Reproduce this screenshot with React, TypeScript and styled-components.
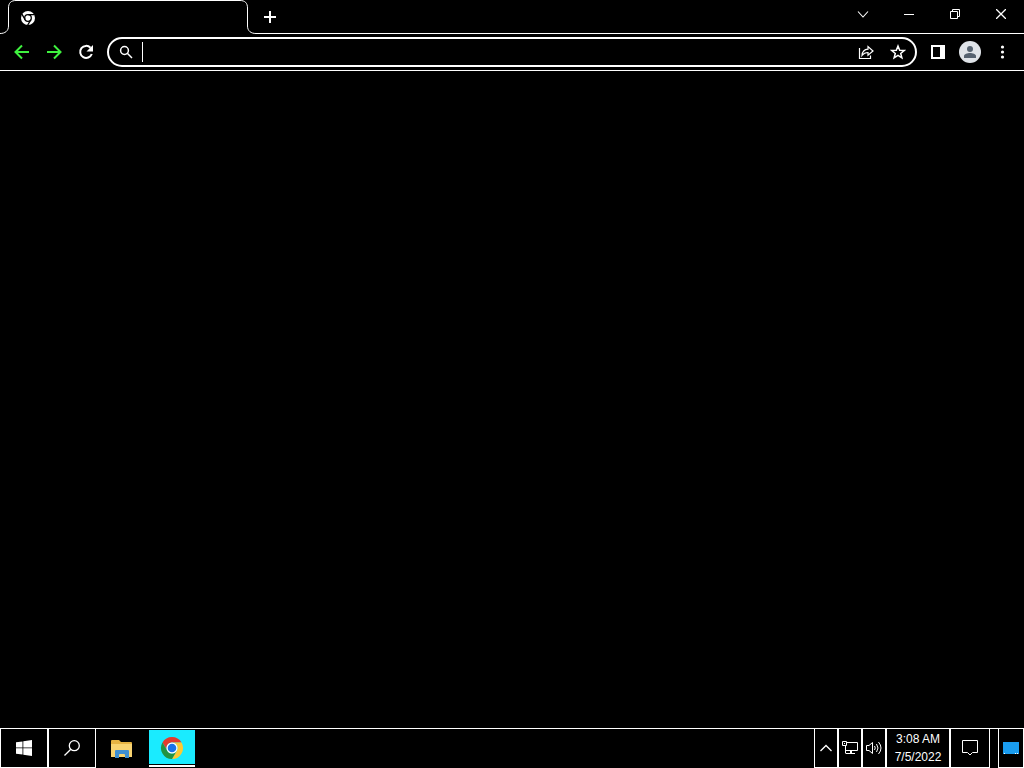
import React from "react";
import styled, { createGlobalStyle, css } from "styled-components";

const Global = createGlobalStyle`
  * { box-sizing: border-box; }
  html, body, #root { height: 100%; }
  body { margin: 0; background: #000; color: #fff; font-family: "Liberation Sans", sans-serif; overflow: hidden; }
  button { appearance: none; border: 0; padding: 0; margin: 0; background: none; color: inherit; font: inherit; }
  svg { display: block; }
`;

const Screen = styled.div`
  display: flex;
  flex-direction: column;
  height: 100%;
`;

const TabStrip = styled.header`
  display: flex;
  height: 34px;
`;

const StripBase = styled.div`
  display: flex;
  align-items: center;
  justify-content: space-between;
  flex: 1;
  border-bottom: 1px solid #fff;
`;

const TabEdge = styled.svg`
  flex: none;
  width: 16px;
  height: 34px;
`;

const Tab = styled.div`
  display: flex;
  align-items: center;
  flex: 0 1 224px;
  border-top: 1px solid #fff;
  padding-left: 4px;
`;

const IconButton = styled.button<{ $w?: number; $h?: number; $color?: string }>`
  display: flex;
  align-items: center;
  justify-content: center;
  flex: none;
  width: ${(p) => p.$w ?? 32}px;
  height: ${(p) => p.$h ?? 32}px;
  color: ${(p) => p.$color ?? "#fff"};
`;

const WindowButtons = styled.div`
  display: flex;
  align-self: flex-start;
`;

const Toolbar = styled.nav`
  display: flex;
  align-items: center;
  height: 37px;
  padding: 0 6px;
  border-bottom: 1px solid #fff;
`;

const AddressBar = styled.form`
  display: flex;
  align-items: center;
  flex: 1;
  min-width: 0;
  height: 30px;
  margin: 0 5px;
  padding: 0 1px 0 9px;
  border: 2px solid #fff;
  border-radius: 15px;
`;

const AddressInput = styled.input`
  flex: 1;
  min-width: 0;
  height: 20px;
  margin-left: 8px;
  padding: 0 6px;
  border: 0;
  border-left: 1px solid #fff;
  outline: 0;
  background: transparent;
  color: #fff;
  font: inherit;
  font-size: 14px;
`;

const Page = styled.main`
  flex: 1;
`;

const Taskbar = styled.footer`
  display: flex;
  height: 40px;
  border-top: 1px solid #fff;
`;

const boxed = css`
  border: 1px solid #fff;
  border-top: 0;
`;

const TaskButton = styled.button<{ $w: number; $boxed?: boolean }>`
  display: flex;
  align-items: center;
  justify-content: center;
  flex: none;
  width: ${(p) => p.$w}px;
  ${(p) => p.$boxed && boxed}
`;

const ActiveTask = styled(TaskButton)`
  height: 37px;
  margin: 1px 0 0 1px;
  background: #1aebff;
  border-bottom: 2px solid #fff;
  box-shadow: inset 0 -1px #000;
`;

const Spacer = styled.div`
  flex: 1;
`;

const Clock = styled(TaskButton)`
  flex-direction: column;
  font-size: 12px;
  line-height: 18px;
  white-space: nowrap;
`;

const DesktopCorner = styled(TaskButton)`
  margin-left: 8px;
`;

const ChromeMono = () => (
  <svg width="16" height="16" viewBox="0 0 16 16">
    <circle cx="8" cy="8" r="7" fill="#fff" />
    <circle cx="8" cy="8" r="3.300" fill="none" stroke="#000" strokeWidth="1.300" />
    <path d="M8 4.700H14.500M5.140 9.650L1.900 4.050M10.860 9.650L7.600 15.250" stroke="#000" strokeWidth="1.300" />
  </svg>
);

const ChromeColor = () => (
  <svg width="24" height="24" viewBox="0 0 24 24">
    <path d="M2.470 6.500A11 11 0 0 1 21.530 6.500H12A5.500 5.500 0 0 0 7.240 14.750Z" fill="#e33b2e" />
    <path d="M21.530 6.500A11 11 0 0 1 12 23L16.760 14.750A5.500 5.500 0 0 0 12 6.500Z" fill="#fcc934" />
    <path d="M12 23A11 11 0 0 1 2.470 6.500L7.240 14.750A5.500 5.500 0 0 0 16.760 14.750Z" fill="#229342" />
    <circle cx="12" cy="12" r="5.500" fill="#fff" />
    <circle cx="12" cy="12" r="4.300" fill="#1a73e8" />
  </svg>
);

export default function App() {
  return (
    <Screen>
      <Global />
      <TabStrip>
        <TabEdge viewBox="0 0 16 34" fill="none" stroke="#fff">
          <path d="M0 33.500C5 33.500 8.500 31 8.500 26V8C8.500 3 11 .5 16 .5" />
        </TabEdge>
        <Tab>
          <ChromeMono />
        </Tab>
        <TabEdge viewBox="0 0 16 34" fill="none" stroke="#fff">
          <path d="M0 .5C5 .5 7.500 3 7.500 8V26C7.500 31 11 33.500 16 33.500" />
        </TabEdge>
        <StripBase>
          <IconButton aria-label="New tab" $w={28} $h={28}>
            <svg width="12" height="12" viewBox="0 0 12 12" stroke="#fff" strokeWidth="2"><path d="M6 0V12M0 6H12" /></svg>
          </IconButton>
          <WindowButtons>
            <IconButton aria-label="Search tabs" $w={46} $h={28}>
              <svg width="12" height="12" viewBox="0 0 12 12" fill="none" stroke="#fff" strokeWidth="1.100"><path d="M1 3.500L6 9L11 3.500" /></svg>
            </IconButton>
            <IconButton aria-label="Minimize" $w={46} $h={28}>
              <svg width="10" height="10" viewBox="0 0 10 10" stroke="#fff"><path d="M0 5.500H10" /></svg>
            </IconButton>
            <IconButton aria-label="Restore" $w={46} $h={28}>
              <svg width="10" height="10" viewBox="0 0 10 10" fill="none" stroke="#fff"><path d="M.5 2.500H7.500V9.500H.5ZM2.500 2.500V.5H9.500V7.500H7.500" /></svg>
            </IconButton>
            <IconButton aria-label="Close" $w={46} $h={28}>
              <svg width="10" height="10" viewBox="0 0 10 10" stroke="#fff" strokeWidth="1.300"><path d="M0 0L10 10M10 0L0 10" /></svg>
            </IconButton>
          </WindowButtons>
        </StripBase>
      </TabStrip>
      <Toolbar>
        <IconButton aria-label="Back" $color="#3ff23f">
          <svg width="16" height="16" viewBox="0 0 16 16" fill="none" stroke="currentColor" strokeWidth="2"><path d="M15 8H2M8 1.500L1.500 8L8 14.500" /></svg>
        </IconButton>
        <IconButton aria-label="Forward" $color="#3ff23f">
          <svg width="16" height="16" viewBox="0 0 16 16" fill="none" stroke="currentColor" strokeWidth="2"><path d="M1 8H14M8 1.500L14.500 8L8 14.500" /></svg>
        </IconButton>
        <IconButton aria-label="Reload">
          <svg width="16" height="16" viewBox="0 0 16 16"><path d="M12.500 3.700A6 6 0 1 0 13.800 10" fill="none" stroke="#fff" strokeWidth="2" /><path d="M15 1V7.500H8.500Z" fill="#fff" /></svg>
        </IconButton>
        <AddressBar>
          <svg width="16" height="16" viewBox="0 0 16 16" fill="none" stroke="#fff" strokeWidth="1.500"><circle cx="6.500" cy="6.500" r="3.900" /><path d="M9.300 9.300L14 14" /></svg>
          <AddressInput aria-label="Address and search bar" />
          <IconButton type="button" aria-label="Share this page" $h={24}>
            <svg width="16" height="16" viewBox="0 0 16 16" fill="none" stroke="#fff" strokeWidth="1.200"><path d="M1.500 4V14.500H12.500V11.500M4 11.500C4.300 7.500 6 5.500 10 5.200V2.500L15 7L10 11.200V8.500C7 8.500 5.500 9.500 4 11.500Z" /></svg>
          </IconButton>
          <IconButton type="button" aria-label="Bookmark this tab" $h={24}>
            <svg width="16" height="16" viewBox="0 0 16 16" fill="none" stroke="#fff" strokeWidth="1.500"><path d="M8 2L9.700 6.200L14.200 6.500L10.700 9.400L11.900 13.800L8 11.400L4.100 13.800L5.300 9.400L1.800 6.500L6.300 6.200Z" /></svg>
          </IconButton>
        </AddressBar>
        <IconButton aria-label="Side panel">
          <svg width="14" height="14" viewBox="0 0 14 14"><path d="M0 0H14V14H0ZM2 2V12H9V2Z" fill="#fff" fillRule="evenodd" /></svg>
        </IconButton>
        <IconButton aria-label="Profile">
          <svg width="22" height="22" viewBox="0 0 22 22"><circle cx="11" cy="11" r="11" fill="#dfe3e8" /><circle cx="11" cy="8" r="3" fill="#566270" /><path d="M5 17V15C5 13 8.500 12 11 12S17 13 17 15V17Z" fill="#566270" /></svg>
        </IconButton>
        <IconButton aria-label="Chrome menu">
          <svg width="5" height="14" viewBox="0 0 5 14" fill="#fff"><circle cx="2.500" cy="2" r="1.600" /><circle cx="2.500" cy="7" r="1.600" /><circle cx="2.500" cy="12" r="1.600" /></svg>
        </IconButton>
      </Toolbar>
      <Page />
      <Taskbar>
        <TaskButton $w={48} $boxed aria-label="Start">
          <svg width="16" height="16" viewBox="0 0 16 16" fill="#fff"><path d="M0 2.300L6.500 1.400V7.500H0ZM7.300 1.300L16 0V7.500H7.300ZM0 8.300H6.500V14.600L0 13.700ZM7.300 8.300H16V16L7.300 14.700Z" /></svg>
        </TaskButton>
        <TaskButton $w={48} $boxed aria-label="Search">
          <svg width="16" height="16" viewBox="0 0 16 16" fill="none" stroke="#fff" strokeWidth="1.300"><circle cx="10.300" cy="5.700" r="5" /><path d="M6.800 9.200L.5 15.500" /></svg>
        </TaskButton>
        <TaskButton $w={52} aria-label="File Explorer">
          <svg width="22" height="18" viewBox="0 0 22 18"><path d="M0 1Q0 0 1 0H8L10 2H20Q21 2 21 3V17H0Z" fill="#e6b343" /><path d="M0 4H21V17H0Z" fill="#f8d371" /><path d="M4 11Q4 10 5 10H17Q18 10 18 11V18H14V15Q14 14 13 14H9Q8 14 8 15V18H4Z" fill="#3f8fd2" /></svg>
        </TaskButton>
        <ActiveTask $w={46} aria-label="Google Chrome">
          <ChromeColor />
        </ActiveTask>
        <Spacer />
        <TaskButton $w={24} $boxed aria-label="Show hidden icons">
          <svg width="12" height="8" viewBox="0 0 12 8" fill="none" stroke="#fff" strokeWidth="1.300"><path d="M.5 7L6 1.500L11.500 7" /></svg>
        </TaskButton>
        <TaskButton $w={24} $boxed aria-label="Network">
          <svg width="16" height="14" viewBox="0 0 16 14" fill="none" stroke="#fff"><path d="M5 1.500H15.500V9.500H3.500M.5 .5H4.500V4.500H.5ZM2.500 2V3M3.500 5V12.500M8.500 9.500V12.500M9.500 9.500V12.500M4 12.500H13" /></svg>
        </TaskButton>
        <TaskButton $w={24} $boxed aria-label="Volume">
          <svg width="16" height="14" viewBox="0 0 16 14" fill="none" stroke="#fff"><path d="M.5 4.500H3L6.500 1.500V12.500L3 9.500H.5ZM8.500 5Q10 7 8.500 9M10.500 3Q13.500 7 10.500 11M12.500 1Q17.500 7 12.500 13" /></svg>
        </TaskButton>
        <Clock $w={64} $boxed>
          <span>3:08 AM</span>
          <span>7/5/2022</span>
        </Clock>
        <TaskButton $w={40} $boxed aria-label="Notifications">
          <svg width="16" height="16" viewBox="0 0 16 16" fill="none" stroke="#fff"><path d="M.5 .5H15.500V12.500H10.500L8 15L5.500 12.500H.5Z" /></svg>
        </TaskButton>
        <DesktopCorner $w={26} $boxed aria-label="Show desktop">
          <svg width="16" height="12" viewBox="0 0 16 12"><path d="M0 0H16V12H0Z" fill="#1a9df0" /><path d="M1 11.500H2M12 11.500H13M14 11.500H15" stroke="#fff" /></svg>
        </DesktopCorner>
      </Taskbar>
    </Screen>
  );
}
